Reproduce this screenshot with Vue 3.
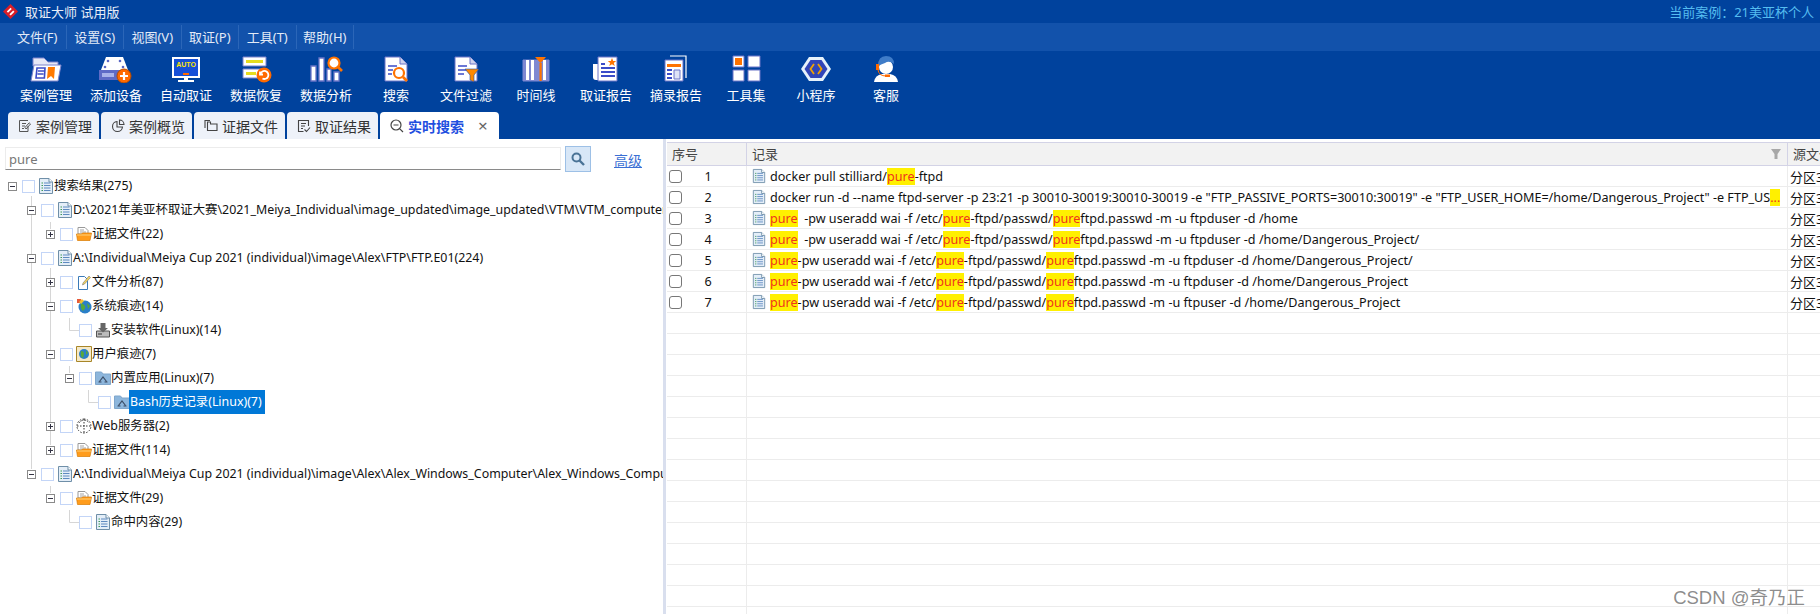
<template>
  <div class="app">
    <svg class="sprite" width="0" height="0">
      <symbol id="tb-folder" viewBox="0 0 36 28">
        <path d="M5 3h11l4 4h10v4H5z" fill="#e6e8f6" stroke="#7c84cc" />
        <path d="M6 10h27l-3 16H3z" fill="#fff" stroke="#7c84cc" />
        <path d="M9 13h8l-.6 10H8zM10 16h6M9.500 19h6" fill="none" stroke="#3b4cc8" stroke-width="1.600" />
        <path d="M20 12h7l-1 12-3-3-4 3z" fill="#ff7a00" />
      </symbol>
      <symbol id="tb-device" viewBox="0 0 36 28">
        <path d="M8 2h17l5 13H3z" fill="#fff" />
        <g fill="#5a66c4"><circle cx="10" cy="6" r="1.300" /><circle cx="22" cy="6" r="1.300" /><circle cx="7" cy="12" r="1.300" /><circle cx="25" cy="12" r="1.300" /></g>
        <path d="M1 15h30v10H1z" fill="#5f6bc6" />
        <path d="M4 18h12v4H4z" fill="#aab3ea" />
        <circle cx="26" cy="21" r="7" fill="#ff6a00" stroke="#b84c00" />
        <path d="M22 21h8M26 17v8" stroke="#fff" stroke-width="2.200" />
      </symbol>
      <symbol id="tb-auto" viewBox="0 0 36 28">
        <path d="M4 2h28v21H4z" fill="#fff" />
        <path d="M6 4h24v17H6z" fill="#1650d8" />
        <text x="18" y="12" text-anchor="middle" font-size="7" font-weight="700" font-family="Liberation Sans, sans-serif" fill="#ffe600">AUTO</text>
        <path d="M15 18h6v2h-6z" fill="#ff6a00" />
        <path d="M16 23h4v2h-4zM10 25h16v2H10z" fill="#fff" />
      </symbol>
      <symbol id="tb-recover" viewBox="0 0 36 28">
        <path d="M5 2h23v9H5zM5 14h23v9H5z" fill="#fff" stroke="#7c84cc" />
        <path d="M8 5h17v3H8zM8 17h10v3H8z" fill="#e6dc1e" />
        <circle cx="26" cy="20" r="7.500" fill="#ff6a00" />
        <path d="M22.500 19a4 4 0 1 1 2 4.500M22 16.500v3h3" fill="none" stroke="#fff" stroke-width="1.800" />
      </symbol>
      <symbol id="tb-analysis" viewBox="0 0 36 28">
        <path d="M3 11h5v15H3zM11 3h5v23h-5zM19 14h4v12h-4zM26 17h5v9h-5z" fill="#fff" stroke="#6a74c8" stroke-width="1.300" />
        <circle cx="26" cy="8" r="5.500" fill="#fff" stroke="#ff7300" stroke-width="2.200" />
        <path d="M30 12l4 4" stroke="#ff7300" stroke-width="2.600" />
      </symbol>
      <symbol id="tb-search" viewBox="0 0 36 28">
        <path d="M7 2h15l7 7v17H7z" fill="#fff" stroke="#6a74c8" />
        <path d="M22 2v7h7" fill="#cfd3ee" stroke="#6a74c8" />
        <path d="M10 11h9M10 15h5M10 19h4" stroke="#3b4cc8" stroke-width="1.600" />
        <circle cx="21" cy="18" r="5" fill="#fff" stroke="#ff7300" stroke-width="2.200" />
        <path d="M25 22l4 4" stroke="#ff7300" stroke-width="2.600" />
      </symbol>
      <symbol id="tb-filter" viewBox="0 0 36 28">
        <path d="M7 2h15l7 7v17H7z" fill="#fff" stroke="#6a74c8" />
        <path d="M22 2v7h7" fill="#cfd3ee" stroke="#6a74c8" />
        <path d="M10 11h9M10 15h9M10 19h6" stroke="#3b4cc8" stroke-width="1.600" />
        <path d="M17 14h14l-5 6v7l-4-2v-5z" fill="#ff8a00" stroke="#1c4aa8" stroke-width=".6" />
      </symbol>
      <symbol id="tb-time" viewBox="0 0 36 28">
        <path d="M5 5h26v21H5z" fill="#7f88d2" stroke="#7f88d2" />
        <path d="M8 5h3v20H8zM13 5h3v20h-3zM25 5h3v20h-3z" fill="#fff" />
        <path d="M17 2h11l-5.500 6z" fill="#ff7300" />
        <path d="M21.500 8h2.200v18h-2.200z" fill="#ff7300" />
      </symbol>
      <symbol id="tb-report" viewBox="0 0 36 28">
        <path d="M5 9h5v16H8q-3 0-3-3z" fill="#fff" />
        <path d="M10 2h19v24H10z" fill="#fff" stroke="#6a74c8" />
        <path d="M13 9h4M13 13h14M13 17h14M13 21h14" stroke="#3b4cc8" stroke-width="1.800" />
        <path d="M24 3l1.200 3h3l-2.400 2 1 3-2.800-1.800-2.800 1.800 1-3-2.400-2h3z" fill="#ff7300" />
      </symbol>
      <symbol id="tb-excerpt" viewBox="0 0 36 28">
        <path d="M12 1h16v22" fill="none" stroke="#fff" stroke-width="1.200" />
        <path d="M7 5h18v21H7z" fill="#fff" stroke="#6a74c8" />
        <path d="M9 9h14v3H9z" fill="#ff7300" />
        <path d="M9 15h5M9 19h5M9 23h5" stroke="#3b4cc8" stroke-width="1.800" />
        <path d="M16 15h6v9h-6z" fill="#dfe3f6" stroke="#6a74c8" />
      </symbol>
      <symbol id="tb-tools" viewBox="0 0 36 28">
        <path d="M5 1h11v11H5zM20 1h12v11H20zM5 15h11v11H5zM20 15h12v11H20z" fill="#fff" stroke="#6a74c8" />
        <path d="M7 3h7v7H7z" fill="#ff7300" />
      </symbol>
      <symbol id="tb-mini" viewBox="0 0 36 28">
        <path d="M11 2h14l8 12-8 12H11L3 14z" fill="#e6f2fb" />
        <path d="M12.500 5h11l6 9-6 9h-11l-6-9z" fill="#3145b8" />
        <path d="M16 9l-3.500 5 3.500 5M20 9l3.500 5-3.500 5" fill="none" stroke="#f2a100" stroke-width="1.800" />
      </symbol>
      <symbol id="tb-service" viewBox="0 0 36 28">
        <path d="M6 27q1-7 8-8h8q7 1 8 8z" fill="#fff" />
        <ellipse cx="18" cy="12" rx="7" ry="7" fill="#fff" />
        <path d="M10 11q0-10 8-10t8 8q-5-4-9-1-3 1-7 3z" fill="#3f7cc8" />
        <path d="M8 9h3v6H8z" fill="#ff6a00" />
        <path d="M10 15q1 6 8 6" fill="none" stroke="#ff6a00" />
        <path d="M17 19.500h5v2.500h-5z" fill="#ff6a00" />
      </symbol>

      <symbol id="tab-case" viewBox="0 0 14 14">
        <path d="M10 7v5.500H1.500v-11H10M4 4.500h4M4 7h3M4 9.500h2M8 10l4.500-5-1.300-1.200L7 8.500z" fill="none" stroke="#555" />
      </symbol>
      <symbol id="tab-pie" viewBox="0 0 14 14">
        <path d="M6 2.500a5 5 0 1 0 5.500 5.500H6zM8.500 1a4.500 4.500 0 0 1 4.500 4.500H8.500z" fill="none" stroke="#444" stroke-width="1.100" />
      </symbol>
      <symbol id="tab-files" viewBox="0 0 14 14">
        <path d="M3.500 11.500H13V5H6.500V3H3.500zM1 9V1.500h5" fill="none" stroke="#444" stroke-width="1.100" />
      </symbol>
      <symbol id="tab-result" viewBox="0 0 14 14">
        <path d="M6.500 12.500H1.500v-11h10V7M4 4.500h5M4 7h4M4 9.500h2M7.500 10.500l2 2 3.500-4" fill="none" stroke="#444" stroke-width="1.100" />
      </symbol>
      <symbol id="tab-search" viewBox="0 0 14 14">
        <circle cx="6" cy="6" r="5" fill="none" stroke="#444" stroke-width="1.200" />
        <path d="M9.800 9.800L13 13M3.500 6h5" stroke="#444" stroke-width="1.200" />
      </symbol>

      <symbol id="t-doc" viewBox="0 0 16 16">
        <path d="M1.500 .5h9.500l3.500 3.500v11.500h-13z" fill="#e4eef8" stroke="#6f8fa8" />
        <path d="M11 .5v3.500h3.500" fill="#fff" stroke="#6f8fa8" />
        <path d="M3.500 5h1.500M3.500 7.500h1.500M3.500 10h1.500M3.500 12.500h1.500" stroke="#3f9a5a" />
        <path d="M6 5h6.500M6 7.500h6.500M6 10h6.500M6 12.500h6.500" stroke="#5f8ac0" />
      </symbol>
      <symbol id="t-folder" viewBox="0 0 16 16">
        <path d="M2 8V1.500h7l3 3V8z" fill="#fff" stroke="#999" />
        <path d="M4 4h4M4 6h6" stroke="#a5a5a5" />
        <path d="M.5 8h5l1-1h9l-1.500 7.500H1.500z" fill="#ff9c1c" stroke="#d87a00" stroke-width=".7" />
        <path d="M1 9h14" stroke="#ffd27a" />
      </symbol>
      <symbol id="t-analysis" viewBox="0 0 16 16">
        <path d="M2.500 2.500h6l3 3v10h-9z" fill="#fff" stroke="#3a7ab8" />
        <path d="M7 9l6-7 1.500 1.500-6 6.500-2 1z" fill="#f5d45a" stroke="#777" stroke-width=".6" />
      </symbol>
      <symbol id="t-globe" viewBox="0 0 16 16">
        <circle cx="9" cy="9" r="6.500" fill="#2a7fc8" />
        <path d="M5 5q3 1 4 3t-2 5q-3-3-2-8zM11 5l3 3-2 3z" fill="#57a83a" />
        <path d="M1 1h4v4H1z" fill="#e65a3a" />
        <path d="M3 4l3-3 2 2-3 3z" fill="#f2c230" />
      </symbol>
      <symbol id="t-install" viewBox="0 0 16 16">
        <path d="M1.500 9h13v6h-13z" fill="#bcbcbc" stroke="#555" />
        <path d="M5.500 1h5v5h2.500L8 10.500 3 6h2.500z" fill="#666" />
        <path d="M3 12h4" stroke="#333" />
      </symbol>
      <symbol id="t-user" viewBox="0 0 16 16">
        <path d="M.500.500h15v15H.500z" fill="#f5e9c8" stroke="#a88628" />
        <circle cx="8" cy="8" r="5" fill="#2a7fc8" />
        <path d="M5 5q3 0 3 3t-2 4q-2-3-1-7zM10 4l2 3-2 2z" fill="#57a83a" />
      </symbol>
      <symbol id="t-app" viewBox="0 0 16 16">
        <path d="M.500 2h6l1.500 2h7.500v10.500H.500z" fill="#8db6dc" stroke="#7fa6cc" />
        <path d="M4.500 11.500L8 7l3.500 4.500M3.500 12h3M9.500 12h3" fill="none" stroke="#3c4d66" stroke-width="1.200" />
      </symbol>
      <symbol id="t-web" viewBox="0 0 16 16">
        <path d="M8 1a7 7 0 1 1-.1 0M1 8h14M8 1v14" fill="none" stroke="#333" stroke-dasharray="1.500 1.500" />
        <path d="M3 5q5-6 10 0" fill="none" stroke="#555" stroke-dasharray="2 1" />
      </symbol>
    </svg>

    <div class="titlebar">
      <svg class="logo" viewBox="0 0 14 14" width="15" height="15">
        <path d="M7 0l7 7-7 7-7-7z" fill="#d81e28" />
        <path d="M3.500 7l3.500-3.500 1.200 1.200-3.500 3.500zM6 9.500l3.500-3.500 1.200 1.200-3.500 3.500z" fill="#fff" />
      </svg>
      <span class="title">取证大师 试用版</span>
      <span class="case-name">当前案例：21美亚杯个人</span>
    </div>

    <div class="menubar">
      <span v-for="m in menus" :key="m" class="menu-item">{{ m }}</span>
    </div>

    <div class="toolbar">
      <div v-for="t in tools" :key="t.label" class="tool">
        <svg class="tool-icon"><use :href="'#tb-' + t.icon" /></svg>
        <span>{{ t.label }}</span>
      </div>
    </div>

    <div class="tabs">
      <div v-for="t in tabs" :key="t.label" :class="['tab', { active: t.active }]">
        <svg class="tab-icon"><use :href="'#tab-' + t.icon" /></svg>
        <span>{{ t.label }}</span>
        <span v-if="t.active" class="tab-close">×</span>
      </div>
    </div>

    <div class="main">
      <div class="left">
        <svg class="guides" viewBox="0 139 663 475" width="663" height="475">
          <path d="M31.500 196V469M50.500 222V229M50.500 268V445M69.500 318V330.500H79M69.500 366V373M88.500 390V402.500H98M50.500 486V493M69.500 510V522.500H79" fill="none" stroke="#d6d6d6" />
        </svg>
        <div class="search">
          <input class="search-input" value="pure" readonly />
          <button class="search-btn">
            <svg viewBox="0 0 14 14" width="14" height="14">
              <circle cx="5.500" cy="5.500" r="4" fill="none" stroke="#4a7396" stroke-width="2" />
              <path d="M8.500 8.500L13 13" stroke="#4a7396" stroke-width="2.400" />
            </svg>
          </button>
          <a class="adv">高级</a>
        </div>
        <div class="tree">
          <div v-for="n in nodes" :key="n.label" class="node" :style="{ paddingLeft: 8 + n.depth * 19 + 'px' }">
            <span :class="['expander', n.state]"></span>
            <span class="check"></span>
            <svg class="node-icon"><use :href="'#t-' + n.icon" /></svg>
            <span :class="['node-label', { selected: n.selected }]">{{ n.label }}</span>
          </div>
        </div>
      </div>

      <div class="table">
        <div class="thead">
          <div class="th c1">序号</div>
          <div class="th c2">记录
            <svg class="filter" viewBox="0 0 12 12" width="12" height="12"><path d="M1 1h10L7.500 6v5h-3V6z" fill="#a8a8a8" /></svg>
          </div>
          <div class="th c3">源文件</div>
        </div>
        <div v-for="(r, i) in rows" :key="i" class="tr">
          <div class="td c1">
            <template v-if="r">
              <span class="row-check"></span>
              <span class="num">{{ i + 1 }}</span>
            </template>
          </div>
          <div class="td c2">
            <template v-if="r">
              <svg class="row-doc"><use href="#t-doc" /></svg>
              <span class="rec"><span v-for="(p, j) in split(r)" :key="j" :class="{ hit: j % 2 === 1 }">{{ p }}</span></span>
            </template>
          </div>
          <div class="td c3"><template v-if="r">分区3</template></div>
        </div>
      </div>
    </div>
    <div class="watermark">CSDN @奇乃正</div>
  </div>
</template>

<script setup>
const menus = ['文件(F)', '设置(S)', '视图(V)', '取证(P)', '工具(T)', '帮助(H)']

const tools = [
  { label: '案例管理', icon: 'folder' },
  { label: '添加设备', icon: 'device' },
  { label: '自动取证', icon: 'auto' },
  { label: '数据恢复', icon: 'recover' },
  { label: '数据分析', icon: 'analysis' },
  { label: '搜索', icon: 'search' },
  { label: '文件过滤', icon: 'filter' },
  { label: '时间线', icon: 'time' },
  { label: '取证报告', icon: 'report' },
  { label: '摘录报告', icon: 'excerpt' },
  { label: '工具集', icon: 'tools' },
  { label: '小程序', icon: 'mini' },
  { label: '客服', icon: 'service' },
]

const tabs = [
  { label: '案例管理', icon: 'case' },
  { label: '案例概览', icon: 'pie' },
  { label: '证据文件', icon: 'files' },
  { label: '取证结果', icon: 'result' },
  { label: '实时搜索', icon: 'search', active: true },
]

const nodes = [
  { depth: 0, state: 'open', icon: 'doc', label: '搜索结果(275)' },
  { depth: 1, state: 'open', icon: 'doc', label: 'D:\\2021年美亚杯取证大赛\\2021_Meiya_Individual\\image_updated\\image_updated\\VTM\\VTM_computer' },
  { depth: 2, state: 'closed', icon: 'folder', label: '证据文件(22)' },
  { depth: 1, state: 'open', icon: 'doc', label: 'A:\\Individual\\Meiya Cup 2021 (individual)\\image\\Alex\\FTP\\FTP.E01(224)' },
  { depth: 2, state: 'closed', icon: 'analysis', label: '文件分析(87)' },
  { depth: 2, state: 'open', icon: 'globe', label: '系统痕迹(14)' },
  { depth: 3, state: 'leaf', icon: 'install', label: '安装软件(Linux)(14)' },
  { depth: 2, state: 'open', icon: 'user', label: '用户痕迹(7)' },
  { depth: 3, state: 'open', icon: 'app', label: '内置应用(Linux)(7)' },
  { depth: 4, state: 'leaf', icon: 'app', label: 'Bash历史记录(Linux)(7)', selected: true },
  { depth: 2, state: 'closed', icon: 'web', label: 'Web服务器(2)' },
  { depth: 2, state: 'closed', icon: 'folder', label: '证据文件(114)' },
  { depth: 1, state: 'open', icon: 'doc', label: 'A:\\Individual\\Meiya Cup 2021 (individual)\\image\\Alex\\Alex_Windows_Computer\\Alex_Windows_Computer.E01(29)' },
  { depth: 2, state: 'open', icon: 'folder', label: '证据文件(29)' },
  { depth: 3, state: 'leaf', icon: 'doc', label: '命中内容(29)' },
]

const records = [
  'docker pull stilliard/pure-ftpd',
  'docker run -d --name ftpd-server -p 23:21 -p 30010-30019:30010-30019 -e "FTP_PASSIVE_PORTS=30010:30019" -e "FTP_USER_HOME=/home/Dangerous_Project" -e FTP_US...',
  'pure  -pw useradd wai -f /etc/pure-ftpd/passwd/pureftpd.passwd -m -u ftpduser -d /home',
  'pure  -pw useradd wai -f /etc/pure-ftpd/passwd/pureftpd.passwd -m -u ftpduser -d /home/Dangerous_Project/',
  'pure-pw useradd wai -f /etc/pure-ftpd/passwd/pureftpd.passwd -m -u ftpduser -d /home/Dangerous_Project/',
  'pure-pw useradd wai -f /etc/pure-ftpd/passwd/pureftpd.passwd -m -u ftpduser -d /home/Dangerous_Project',
  'pure-pw useradd wai -f /etc/pure-ftpd/passwd/pureftpd.passwd -m -u ftpuser -d /home/Dangerous_Project',
]
const rows = [...records, ...Array(15).fill('')]

// odd indexes are the matches, they get the yellow background
const split = (text) => text.split(/(pure|\.\.\.)/)
</script>

<style>
html, body { background: #fff; overflow: hidden; }
</style>

<style scoped>
.app {
  width: 1820px; height: 614px;
  display: flex;
  flex-direction: column;
  overflow: hidden;
  position: relative;
  font-family: "Noto Sans", "Noto Sans CJK SC", sans-serif;
  font-size: 13px;
  color: #111;
}
.sprite { position: absolute; }

.titlebar {
  height: 23px;
  background: #00429d;
  display: flex;
  align-items: center;
  padding: 0 6px 0 3px;
  color: #e8eef8;
}
.logo { margin-right: 7px; }
.case-name { margin-left: auto; color: #55bdf0; }

.menubar {
  height: 28px;
  background: #1252ab;
  display: flex;
  align-items: center;
  padding-left: 9px;
  color: #e3ebf7;
}
.menu-item {
  width: 57.500px;
  line-height: 24px;
  text-align: center;
  border-right: 1px solid #2b66b8;
  box-sizing: border-box;
  white-space: nowrap;
}

.toolbar {
  height: 61px;
  background: #00429d;
  display: flex;
  padding: 4px 0 0 11px;
  box-sizing: border-box;
  color: #fff;
}
.tool {
  width: 70px;
  display: flex;
  flex-direction: column;
  align-items: center;
}
.tool-icon { width: 36px; height: 28px; margin-bottom: 2px; }
.tool span { line-height: 20px; white-space: nowrap; }

.tabs {
  height: 27px;
  background: #00429d;
  display: flex;
  gap: 2px;
  padding-left: 8px;
  font-size: 14px;
}
.tab {
  width: 91px;
  display: flex;
  align-items: center;
  gap: 4px;
  padding-left: 10px;
  box-sizing: border-box;
  background: #eef2f9;
  border-radius: 4px 4px 0 0;
  color: #333;
  white-space: nowrap;
}
.tab.active { width: 119px; background: #fff; color: #1f4fe0; font-weight: 700; }
.tab-icon { width: 14px; height: 14px; }
.tab-close { margin-left: 10px; font-size: 17px; font-weight: 400; color: #666; }

.main { flex: 1; display: flex; min-height: 0; }

.left {
  width: 666px;
  flex-shrink: 0;
  box-sizing: border-box;
  border-right: 3px solid #d9dfee;
  position: relative;
  overflow: hidden;
}
.guides { position: absolute; left: 0; top: 0; }
.search {
  height: 35px;
  display: flex;
  align-items: flex-start;
  padding: 8px 0 0 5px;
  box-sizing: border-box;
  position: relative;
}
.search-input {
  width: 556px; height: 23px;
  box-sizing: border-box;
  border: 1px solid #ececec;
  border-bottom: 1px solid #8a8a8a;
  padding: 0 3px;
  font: inherit;
  font-size: 13px;
  color: #777;
  outline: none;
}
.search-btn {
  width: 26px; height: 26px;
  margin: -1px 0 0 4px;
  padding: 0;
  background: #d8e7f7;
  border: 1px solid #9dc0e6;
  display: flex;
  align-items: center;
  justify-content: center;
}
.adv {
  margin: 3px 0 0 23px;
  color: #3b6fd4;
  text-decoration: underline;
  font-size: 14px;
}

.tree { position: relative; font-size: 12.400px; }
.node {
  height: 24px;
  display: flex;
  align-items: center;
  white-space: nowrap;
}
.expander {
  width: 9px; height: 9px;
  margin-right: 5px;
  flex-shrink: 0;
  box-sizing: border-box;
  position: relative;
  background: #fff;
  border: 1px solid #8a8a8a;
}
.expander.leaf { visibility: hidden; }
.expander.open::before,
.expander.closed::before {
  content: '';
  position: absolute;
  left: 1px; top: 3px;
  width: 5px; height: 1px;
  background: #334;
}
.expander.closed::after {
  content: '';
  position: absolute;
  left: 3px; top: 1px;
  width: 1px; height: 5px;
  background: #334;
}
.check {
  width: 11px; height: 11px;
  margin-right: 4px;
  flex-shrink: 0;
  background: #fff;
  border: 1px solid #c3d5f7;
}
.node-icon { width: 16px; height: 16px; flex-shrink: 0; margin: 0 -1px; }
.node-label { line-height: 24px; padding-left: 1px; }
.node-label.selected { background: #0078d7; color: #fff; padding-right: 3px; }

.table { flex: 1; min-width: 0; padding: 3px 0 0 1px; overflow: hidden; font-size: 12.600px; }
.thead {
  height: 24px;
  display: flex;
  background: #f2f2f2;
  border-top: 1px solid #d3d3e6;
  border-bottom: 1px solid #d3d3e6;
  box-sizing: border-box;
  font-size: 13px;
}
.th { line-height: 22px; padding-left: 5px; color: #444; position: relative; box-sizing: border-box; border-right: 1px solid #d3d3e6; white-space: nowrap; }
.c1 { width: 80px; flex-shrink: 0; box-sizing: border-box; }
.c2 { width: 1041px; flex-shrink: 0; box-sizing: border-box; }
.c3 { flex: 1; min-width: 0; overflow: hidden; white-space: nowrap; border-right: none; }
.filter { position: absolute; right: 5px; top: 5px; }
.tr { height: 21px; display: flex; border-bottom: 1px solid #ececec; box-sizing: border-box; }
.td { display: flex; align-items: center; border-right: 1px solid #ececec; box-sizing: border-box; }
.td.c3 { padding-left: 2px; border-right: none; font-size: 13px; }
.row-check {
  width: 13px; height: 13px;
  margin-left: 2px;
  border: 1px solid #777;
  border-radius: 3px;
  box-sizing: border-box;
}
.num { width: 52px; text-align: center; }
.td.c2 { padding-left: 5px; overflow: hidden; }
.row-doc { width: 14px; height: 16px; margin-right: 4px; flex-shrink: 0; }
.rec { white-space: pre; }
.hit { background: #fff000; color: #f0341c; display: inline-block; line-height: 17px; }

.watermark {
  position: absolute;
  right: 15px; bottom: 5px;
  font-family: "Liberation Sans", "Noto Sans CJK SC", sans-serif;
  font-size: 18.500px;
  color: rgba(120, 120, 120, .85);
}
</style>
